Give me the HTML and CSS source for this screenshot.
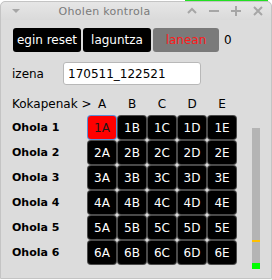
FILE: index.html
```html
<!DOCTYPE html>
<html>
	<head>
		<meta charset="utf-8">
		<title>Oholen kontrola</title>
		<link rel="stylesheet" href="styles.css">
	</head>
	<body>
		<div class="desk-strip"></div>
		<div class="window">
			<!-- leihoaren goiburua -->
			<div class="titlebar">
				<div class="menu-ico">
					<svg width="10" height="6" viewBox="0 0 10 6"><path d="M1 1 L9 1 L5 5 Z" fill="#a6a6a6"/></svg>
				</div>
				<span class="title">Oholen kontrola</span>
				<div class="controls">
					<svg width="22" height="18" viewBox="0 0 22 18"><path d="M7 11 L11 7 L15 11" stroke="#a6a6a6" stroke-width="2" fill="none"/></svg>
					<svg width="22" height="18" viewBox="0 0 22 18"><path d="M6 9 H16" stroke="#a6a6a6" stroke-width="2"/></svg>
					<svg width="22" height="18" viewBox="0 0 22 18"><path d="M6 9 H16 M11 4 V14" stroke="#a6a6a6" stroke-width="2"/></svg>
					<svg width="22" height="18" viewBox="0 0 22 18"><path d="M7 5 L15 13 M15 5 L7 13" stroke="#a6a6a6" stroke-width="2"/></svg>
				</div>
			</div>

			<div class="content">
				<div class="toolbar">
					<button class="btn">egin reset</button>
					<button class="btn">laguntza</button>
					<button class="btn busy">lanean</button>
					<span class="count">0</span>
				</div>

				<div class="name-row">
					<span class="name-label">izena</span>
					<input class="name-input" type="text" value="170511_122521">
				</div>

				<div class="board">
					<div class="matrix">
						<span class="hdr-label">Kokapenak &gt;</span>
						<span class="col">A</span>
						<span class="col">B</span>
						<span class="col">C</span>
						<span class="col">D</span>
						<span class="col">E</span>

						<span class="row-label">Ohola 1</span>
						<button class="cell active">1A</button>
						<button class="cell">1B</button>
						<button class="cell">1C</button>
						<button class="cell">1D</button>
						<button class="cell">1E</button>

						<span class="row-label">Ohola 2</span>
						<button class="cell">2A</button>
						<button class="cell">2B</button>
						<button class="cell">2C</button>
						<button class="cell">2D</button>
						<button class="cell">2E</button>

						<span class="row-label">Ohola 3</span>
						<button class="cell">3A</button>
						<button class="cell">3B</button>
						<button class="cell">3C</button>
						<button class="cell">3D</button>
						<button class="cell">3E</button>

						<span class="row-label">Ohola 4</span>
						<button class="cell">4A</button>
						<button class="cell">4B</button>
						<button class="cell">4C</button>
						<button class="cell">4D</button>
						<button class="cell">4E</button>

						<span class="row-label">Ohola 5</span>
						<button class="cell">5A</button>
						<button class="cell">5B</button>
						<button class="cell">5C</button>
						<button class="cell">5D</button>
						<button class="cell">5E</button>

						<span class="row-label">Ohola 6</span>
						<button class="cell">6A</button>
						<button class="cell">6B</button>
						<button class="cell">6C</button>
						<button class="cell">6D</button>
						<button class="cell">6E</button>
					</div>

					<!-- maila adierazlea -->
					<div class="level">
						<div class="mark"></div>
						<div class="fill"></div>
					</div>
				</div>
			</div>
		</div>
	</body>
</html>
```

FILE: styles.css
```css
body {
	margin: 0;
	background-color: #ffffff;
	font-family: "DejaVu Sans", sans-serif;
	font-size: 12px;
	color: #000;
}

.desk-strip {
	position: absolute;
	top: 0;
	left: 185px;
	width: 83px;
	height: 2px;
	background-color: #22e022;
}

/* leihoa */
.window {
	position: relative;
	margin-top: 1px;
	width: 270px;
	height: 276px;
	border: 1px solid #c4c4c4;
	border-radius: 5px 5px 0 0;
	background-color: #dcdcdc;
	display: flex;
	flex-direction: column;
}

.titlebar {
	height: 18px;
	display: flex;
	align-items: center;
	background: linear-gradient(#e6e6e6, #dadada);
	border-radius: 5px 5px 0 0;
}

.menu-ico {
	width: 25px;
	display: flex;
	justify-content: center;
	padding-left: 2px;
}

.title {
	flex: 1;
	text-align: center;
	font-size: 11px;
	color: #7a7a7a;
	letter-spacing: 0.3px;
}

.controls {
	display: flex;
	padding-right: 2px;
}

.content {
	padding: 8px 0 0 11px;
}

/* botoiak */
.toolbar {
	display: flex;
	align-items: center;
	gap: 2px;
	padding-left: 1px;
}

.btn {
	width: 68px;
	height: 24px;
	padding: 0;
	border: none;
	border-radius: 3px;
	background-color: #000;
	color: #fff;
	font-family: "DejaVu Sans", sans-serif;
	font-size: 12px;
	white-space: nowrap;
	overflow: hidden;
}

.btn.busy {
	width: 66px;
	background-color: #7a7a7a;
	color: #ff1a1a;
}

.count {
	margin-left: 3px;
}

.name-row {
	display: flex;
	align-items: center;
	margin-top: 10px;
}

.name-label {
	width: 51px;
}

.name-input {
	box-sizing: border-box;
	width: 138px;
	height: 23px;
	border: 1px solid #b8b8b8;
	border-radius: 3px;
	padding: 0 0 0 4px;
	font-family: "DejaVu Sans", sans-serif;
	font-size: 12px;
	color: #000;
}

/* oholen taula */
.board {
	display: flex;
	margin-top: 13px;
}

.matrix {
	display: grid;
	grid-template-columns: 74px repeat(5, 28px);
	grid-template-rows: 16px repeat(6, 23px);
	column-gap: 2px;
	row-gap: 2px;
	align-items: center;
}

.hdr-label {
	white-space: nowrap;
	margin-bottom: 5px;
}

.col {
	text-align: center;
	margin-bottom: 5px;
}

.row-label {
	font-weight: bold;
	font-size: 11px;
	white-space: nowrap;
}

.cell {
	height: 23px;
	padding: 0;
	border: none;
	border-radius: 3px;
	background-color: #000;
	color: #fff;
	font-family: "DejaVu Sans", sans-serif;
	font-size: 12px;
	box-shadow: 0 0 0 1px #4a4a4a;
}

.cell.active {
	background-color: #ff0000;
	color: #1a1a1a;
	box-shadow: 0 0 0 1px #5b8fd6;
}

.level {
	position: relative;
	width: 8px;
	height: 141px;
	margin: 30px 0 0 16px;
	background-color: #b4b4b4;
}

.level .mark {
	position: absolute;
	top: 112px;
	width: 8px;
	height: 2px;
	background-color: #ffc000;
}

.level .fill {
	position: absolute;
	bottom: 0;
	width: 8px;
	height: 6px;
	background-color: #00ff00;
}
```
